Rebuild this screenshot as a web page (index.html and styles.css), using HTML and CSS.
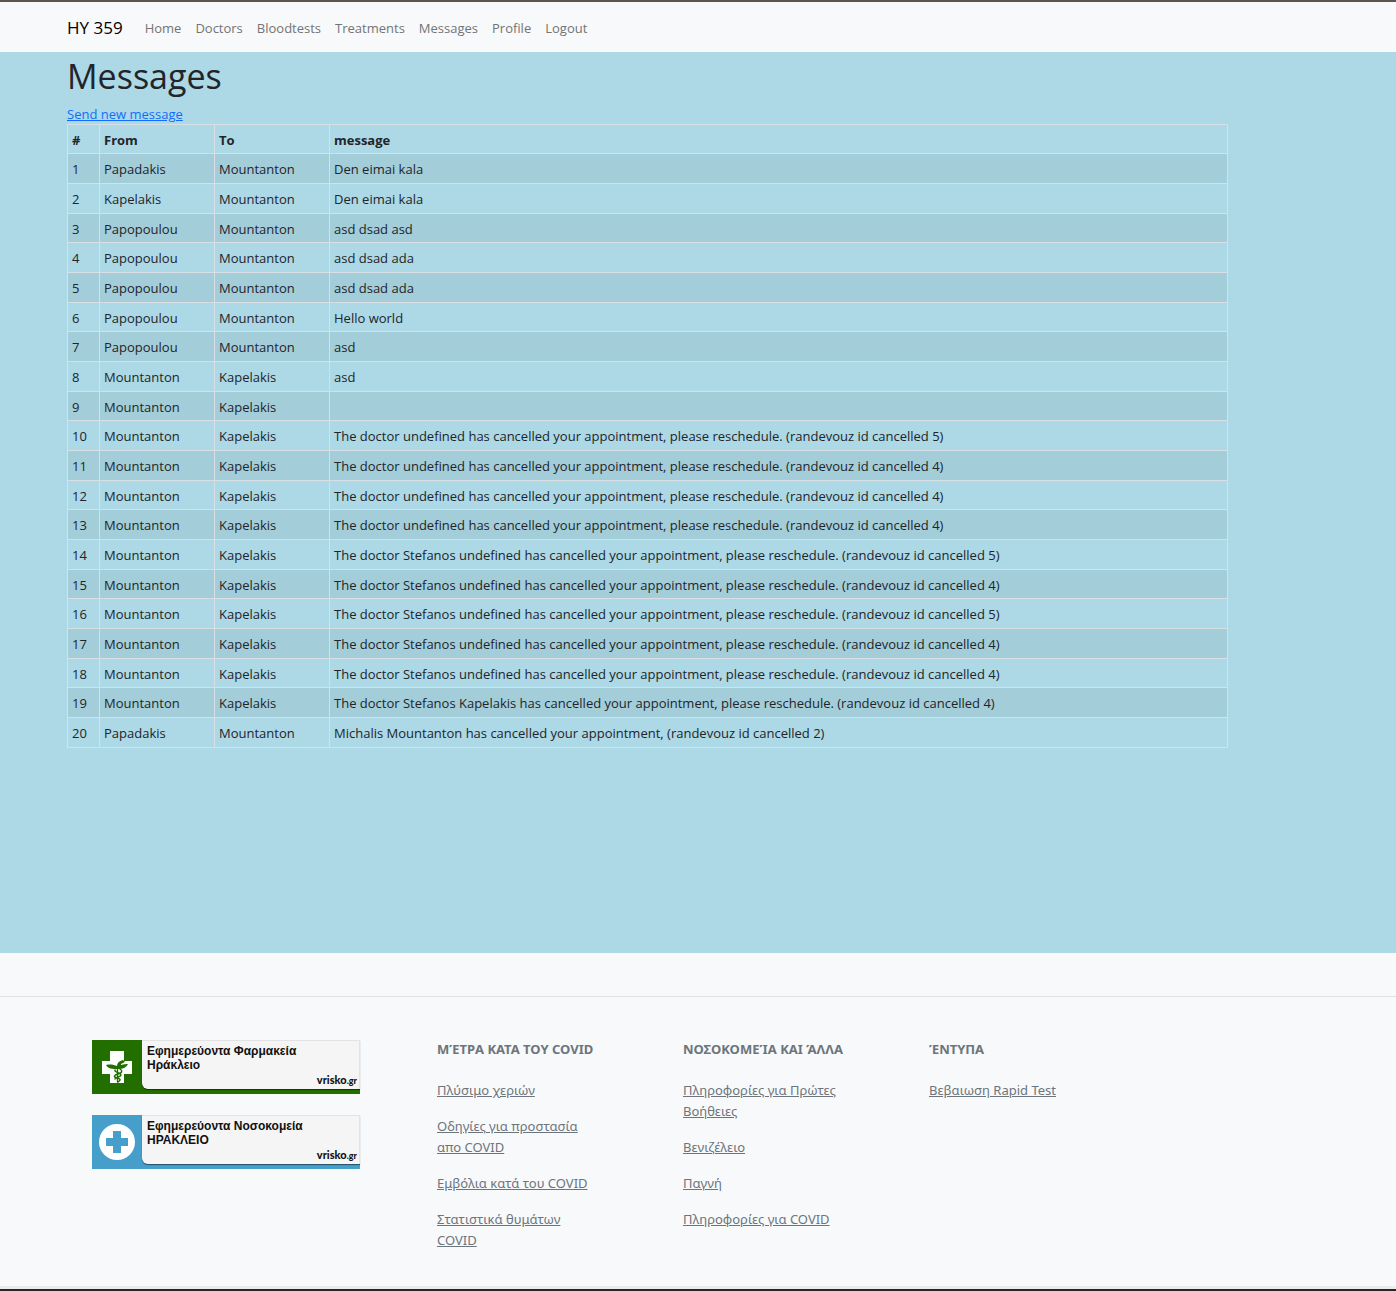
FILE: index.html
```html
<!DOCTYPE html>
<html lang="el">
<head>
<meta charset="utf-8">
<title>Messages</title>
<link rel="stylesheet" href="styles.css">
</head>
<body>
<header class="navbar">
  <a class="brand" href="#">HY 359</a>
  <nav class="nav">
    <a href="#">Home</a>
    <a href="#">Doctors</a>
    <a href="#">Bloodtests</a>
    <a href="#">Treatments</a>
    <a href="#">Messages</a>
    <a href="#">Profile</a>
    <a href="#">Logout</a>
  </nav>
</header>
<main class="content">
  <h1>Messages</h1>
  <a class="send" href="#">Send new message</a>
  <table class="messages">
    <colgroup><col class="col-id"><col class="col-name"><col class="col-name"><col></colgroup>
    <thead>
      <tr><th scope="col">#</th><th scope="col">From</th><th scope="col">To</th><th scope="col">message</th></tr>
    </thead>
    <tbody>
      <tr><td>1</td><td>Papadakis</td><td>Mountanton</td><td>Den eimai kala</td></tr>
      <tr><td>2</td><td>Kapelakis</td><td>Mountanton</td><td>Den eimai kala</td></tr>
      <tr><td>3</td><td>Papopoulou</td><td>Mountanton</td><td>asd dsad asd</td></tr>
      <tr><td>4</td><td>Papopoulou</td><td>Mountanton</td><td>asd dsad ada</td></tr>
      <tr><td>5</td><td>Papopoulou</td><td>Mountanton</td><td>asd dsad ada</td></tr>
      <tr><td>6</td><td>Papopoulou</td><td>Mountanton</td><td>Hello world</td></tr>
      <tr><td>7</td><td>Papopoulou</td><td>Mountanton</td><td>asd</td></tr>
      <tr><td>8</td><td>Mountanton</td><td>Kapelakis</td><td>asd</td></tr>
      <tr><td>9</td><td>Mountanton</td><td>Kapelakis</td><td></td></tr>
      <tr><td>10</td><td>Mountanton</td><td>Kapelakis</td><td>The doctor undefined has cancelled your appointment, please reschedule. (randevouz id cancelled 5)</td></tr>
      <tr><td>11</td><td>Mountanton</td><td>Kapelakis</td><td>The doctor undefined has cancelled your appointment, please reschedule. (randevouz id cancelled 4)</td></tr>
      <tr><td>12</td><td>Mountanton</td><td>Kapelakis</td><td>The doctor undefined has cancelled your appointment, please reschedule. (randevouz id cancelled 4)</td></tr>
      <tr><td>13</td><td>Mountanton</td><td>Kapelakis</td><td>The doctor undefined has cancelled your appointment, please reschedule. (randevouz id cancelled 4)</td></tr>
      <tr><td>14</td><td>Mountanton</td><td>Kapelakis</td><td>The doctor Stefanos undefined has cancelled your appointment, please reschedule. (randevouz id cancelled 5)</td></tr>
      <tr><td>15</td><td>Mountanton</td><td>Kapelakis</td><td>The doctor Stefanos undefined has cancelled your appointment, please reschedule. (randevouz id cancelled 4)</td></tr>
      <tr><td>16</td><td>Mountanton</td><td>Kapelakis</td><td>The doctor Stefanos undefined has cancelled your appointment, please reschedule. (randevouz id cancelled 5)</td></tr>
      <tr><td>17</td><td>Mountanton</td><td>Kapelakis</td><td>The doctor Stefanos undefined has cancelled your appointment, please reschedule. (randevouz id cancelled 4)</td></tr>
      <tr><td>18</td><td>Mountanton</td><td>Kapelakis</td><td>The doctor Stefanos undefined has cancelled your appointment, please reschedule. (randevouz id cancelled 4)</td></tr>
      <tr><td>19</td><td>Mountanton</td><td>Kapelakis</td><td>The doctor Stefanos Kapelakis has cancelled your appointment, please reschedule. (randevouz id cancelled 4)</td></tr>
      <tr><td>20</td><td>Papadakis</td><td>Mountanton</td><td>Michalis Mountanton has cancelled your appointment, (randevouz id cancelled 2)</td></tr>
    </tbody>
  </table>
</main>
<footer class="footer">
  <div class="footer-grid">
    <div class="banners">
      <a class="banner pharmacy" href="#">
        <svg width="50" height="54" viewBox="0 0 50 54" aria-hidden="true">
          <path d="M18 11h14v10h8v13h-8v9H18v-9h-8V21h8z" fill="#fff"/>
          <path d="M14 25c5-1 8 0 11 1 0-3 2-5 6-6l2 2-4 2v1c3-1 5-1 7-1-2 4-5 5-10 5-6 0-10 0-12-4z" fill="#226f00"/>
          <g fill="none" stroke="#226f00" stroke-linecap="round">
            <path d="M25.500 27V42" stroke-width="1.300"/>
            <path d="M28 29c3 2 2 4-2 5s-5 3-1 4 4 2 1 4M23 30c-1 2 6 3 6 5s-5 2-6 4" stroke-width="1.500"/>
          </g>
        </svg>
        <span class="banner-text">Εφημερεύοντα Φαρμακεία<br>Ηράκλειο</span>
        <span class="vrisko">vrisko<small>.gr</small></span>
      </a>
      <a class="banner hospital" href="#">
        <svg width="50" height="54" viewBox="0 0 50 54" aria-hidden="true">
          <circle cx="25" cy="27" r="18" fill="#fff"/>
          <path d="M21 16h8v7h7v8h-7v7h-8v-7h-7v-8h7z" fill="#469fcb"/>
        </svg>
        <span class="banner-text">Εφημερεύοντα Νοσοκομεία<br>ΗΡΑΚΛΕΙΟ</span>
        <span class="vrisko">vrisko<small>.gr</small></span>
      </a>
    </div>
    <section class="links">
      <h2>ΜΈΤΡΑ ΚΑΤΑ ΤΟΥ COVID</h2>
      <p><a href="#">Πλύσιμο χεριών</a></p>
      <p><a href="#">Οδηγίες για προστασία<br>απο COVID</a></p>
      <p><a href="#">Εμβόλια κατά του COVID</a></p>
      <p><a href="#">Στατιστικά θυμάτων<br>COVID</a></p>
    </section>
    <section class="links">
      <h2>ΝΟΣΟΚΟΜΕΊΑ ΚΑΙ ΆΛΛΑ</h2>
      <p><a href="#">Πληροφορίες για Πρώτες<br>Βοήθειες</a></p>
      <p><a href="#">Βενιζέλειο</a></p>
      <p><a href="#">Παγνή</a></p>
      <p><a href="#">Πληροφορίες για COVID</a></p>
    </section>
    <section class="links">
      <h2>ΈΝΤΥΠΑ</h2>
      <p><a href="#">Βεβαιωση Rapid Test</a></p>
    </section>
  </div>
</footer>
</body>
</html>
```
FILE: styles.css
```css
* { box-sizing: border-box; }
body {
  margin: 0;
  min-height: 100vh;
  display: flex;
  flex-direction: column;
  border-top: 2px solid #5e564b;
  background: #add8e6;
  color: #212529;
  font: 13px/21px "Segoe UI", "Open Sans", "Noto Sans", sans-serif;
}
.navbar {
  display: flex;
  align-items: center;
  gap: 22px;
  height: 50px;
  padding: 0 67px;
  background: #f8f9fa;
}
.navbar a { text-decoration: none; white-space: nowrap; }
.brand { color: #000; font-size: 17px; }
.nav { display: flex; gap: 14px; padding-top: 2px; }
.nav a { color: #737475; }
.content { flex: 1; padding: 4px 168px 204px 67px; }
h1 {
  margin: 0 0 7px;
  font-size: 34px;
  font-weight: 400;
  line-height: 41px;
}
.send { display: block; width: max-content; line-height: 20px; color: #0d6efd; }
.messages {
  width: 100%;
  border-collapse: collapse;
  table-layout: fixed;
}
.col-id { width: 32px; }
.col-name { width: 115px; }
.messages th, .messages td {
  padding: 5px 4px 3px;
  border: 1px solid #d9e0e5;
  text-align: left;
  vertical-align: top;
}
.messages thead th, .messages tbody tr:nth-child(3n) td { line-height: 20px; }
.messages td { height: 29px; }
.messages tbody tr:nth-child(odd) { background: #a4cdda; }
.footer {
  padding-top: 43px;
  background: #f8f9fa;
  border-bottom: 2px solid #2a2425;
  box-shadow: inset 0 -3px #eaecee;
}
.footer-grid {
  display: grid;
  grid-template-columns: 268px 169px 169px 169px;
  column-gap: 77px;
  padding: 43px 92px 38px;
  border-top: 1px solid #dee2e6;
}
.banners { display: grid; gap: 21px; align-content: start; }
.banner {
  position: relative;
  display: flex;
  align-items: flex-start;
  height: 54px;
  color: #111;
  text-decoration: none;
}
.banner svg { flex: none; }
.pharmacy { background: #226f00; }
.hospital { background: #469fcb; }
.banner-text {
  flex: 1;
  height: 49px;
  padding: 3px 5px;
  background: #f5f5f5;
  border: 1px solid #e3e3e3;
  border-width: 1px 1px 0 0;
  border-radius: 0 0 0 6px;
  box-shadow: 0 1px 1px rgba(0, 0, 0, .5);
  font: bold 12px/14px "Liberation Sans", Arial, sans-serif;
  white-space: nowrap;
}
.vrisko {
  position: absolute;
  right: 3px;
  bottom: 6px;
  font: 900 11px/14px Lato, sans-serif;
}
.vrisko small { font-size: 9px; }
.links { margin-top: -1px; color: #6c757d; white-space: nowrap; font-family: "Segoe UI", "Noto Sans", "Open Sans", sans-serif; }
.links h2 {
  margin: 0 0 20px;
  font-size: 13px;
  line-height: 21px;
  font-weight: 700;
}
.links p { margin: 0 0 15px; }
.links a { color: inherit; }
.links p:last-child { margin-bottom: 0; }
```
